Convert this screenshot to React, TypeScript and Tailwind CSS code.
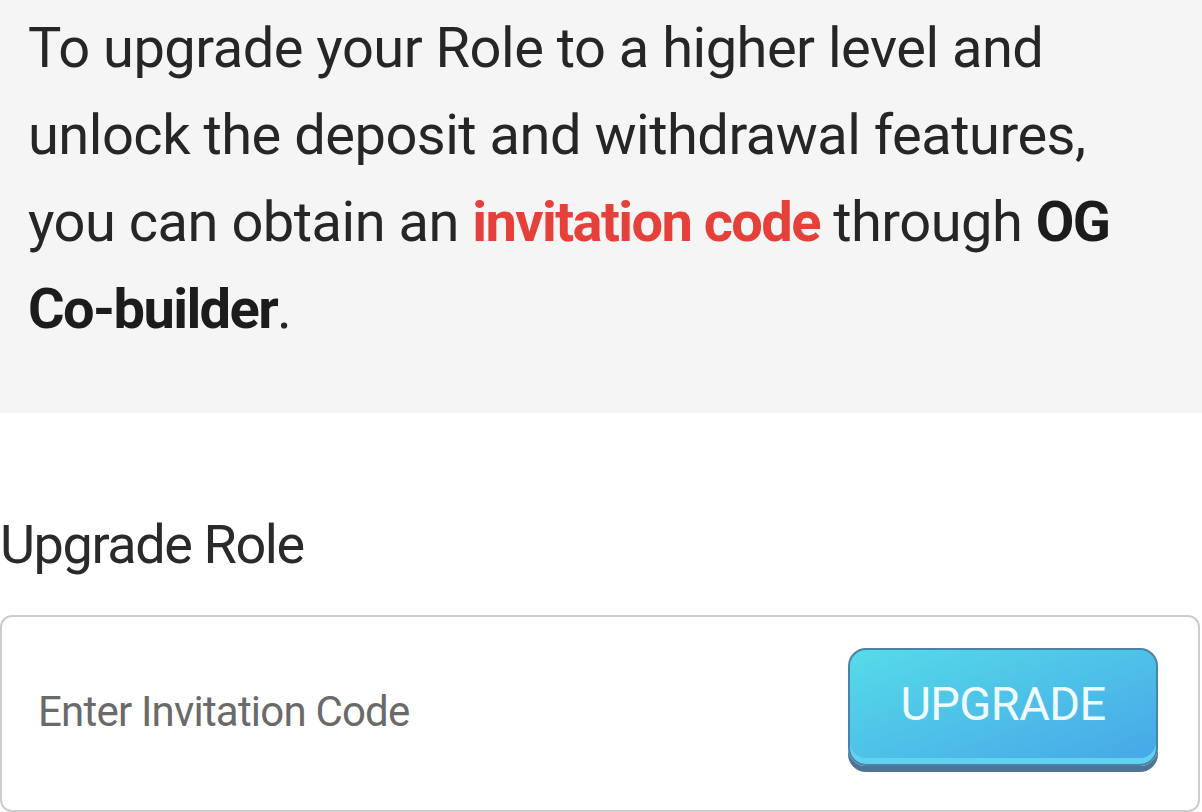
export default function App() {
  return (
    <div className="w-[1202px] h-[812px] bg-white overflow-hidden font-['Roboto',sans-serif] text-[#262626]">
      <div className="bg-[#f5f5f5] h-[413px] pl-[28px] pt-[5px]">
        <p className="text-[56px] leading-[87px] tracking-[-0.5px] whitespace-nowrap">
          To upgrade your Role to a higher level and
          <br />
          unlock the deposit and withdrawal features,
          <br />
          you can obtain an{' '}
          <span className="font-bold text-[#e5403a] tracking-[-1.6px]">invitation code</span> through{' '}
          <span className="font-bold text-[#1c1c1c] tracking-[-1.6px]">OG</span>
          <br />
          <span className="font-bold text-[#1c1c1c] tracking-[-1.6px]">Co-builder</span>.
        </p>
      </div>

      <div className="pt-[97px]">
        <h2 className="text-[54px] leading-[70px] tracking-[-1.4px] text-[#2a2a2a]">Upgrade Role</h2>

        <div className="mt-[35px] h-[197px] w-[1200px] rounded-[12px] border-2 border-[#cdcdcd] flex items-center justify-between pl-[36px] pr-[40px]">
          <input
            placeholder="Enter Invitation Code"
            className="bg-transparent outline-none text-[42px] tracking-[-0.8px] text-[#333] placeholder:text-[#6a6a6a] w-[600px] pb-[4px]"
          />
          <button className="relative h-[118px] w-[310px] mt-[-14px] rounded-[18px] border-2 border-[#4b82a8] bg-gradient-to-br from-[#56dbe8] to-[#47a6e7] shadow-[0_6px_0_#4f7396,inset_0_-6px_0_#5fd3ef] flex items-center justify-center">
            <span className="text-[47px] tracking-[-0.6px] text-[#eefcff] pb-[4px]">UPGRADE</span>
          </button>
        </div>
      </div>
    </div>
  );
}
